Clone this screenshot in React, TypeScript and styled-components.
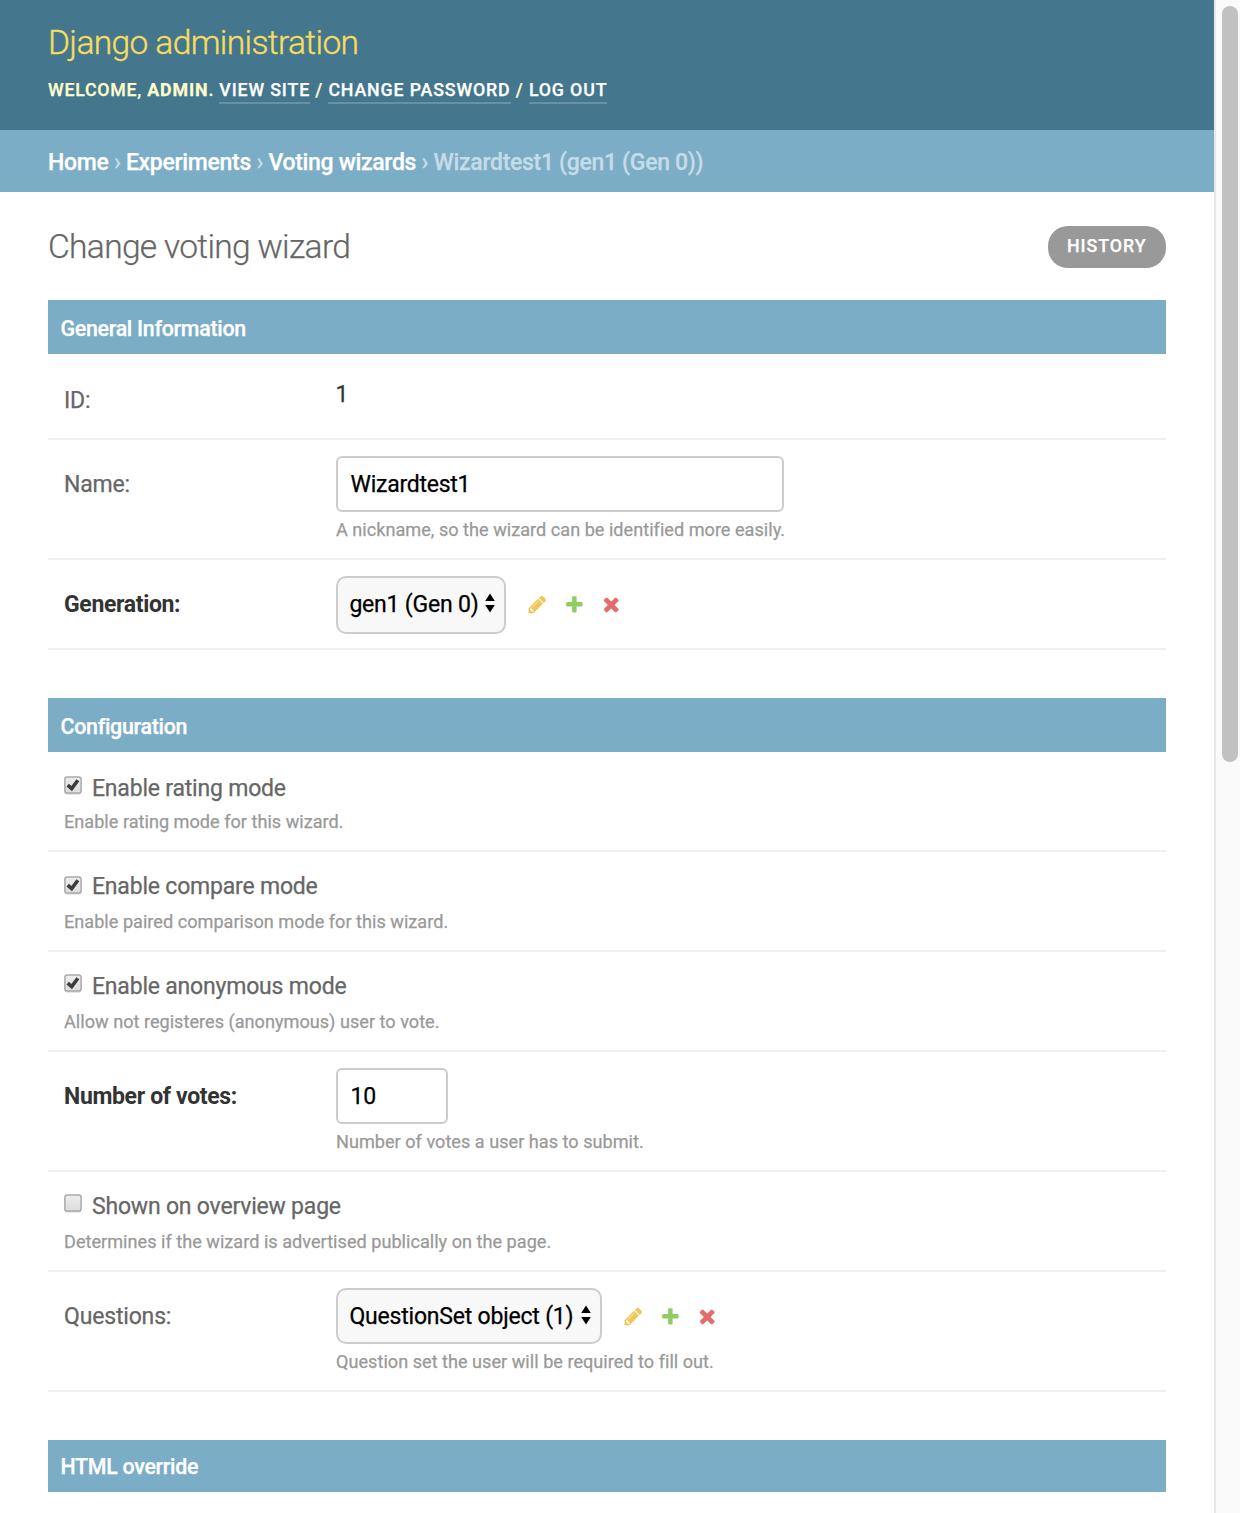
import React from "react";
import styled, { createGlobalStyle, css } from "styled-components";

const GlobalStyle = createGlobalStyle`
  * { box-sizing: border-box; }
  body {
    margin: 0;
    background: #fff;
    color: #333;
    font-family: Roboto, "Liberation Sans", sans-serif;
    font-size: 23px;
    -webkit-text-stroke: 0.25px currentColor;
  }
`;

const Screen = styled.div`
  display: flex;
  height: 1513px;
  overflow: hidden;
`;

const Page = styled.div`
  flex: 1;
  min-width: 0;
`;

const Header = styled.header`
  height: 130px;
  padding: 22px 48px 0;
  background: #44768e;
  color: #ffffcc;
`;

const SiteName = styled.h1`
  margin: 0;
  font-size: 33.6px;
  line-height: 42px;
  font-weight: 300;
  letter-spacing: -0.64px;
  color: #f5dd5d;
  -webkit-text-stroke: 0.4px #f5dd5d;
`;

const UserTools = styled.div`
  display: flex;
  margin-top: 14px;
  font-size: 17.8px;
  line-height: 24px;
  font-weight: 500;
  letter-spacing: 0.85px;
  text-transform: uppercase;
  white-space: pre;

  strong { font-weight: 700; letter-spacing: 0.9px; }
`;

const Greeting = styled.span`
  letter-spacing: 0.73px;
`;

const ToolLink = styled.a`
  height: 26px;
  color: #fff;
  border-bottom: 2px solid #6991a4;
`;

const Breadcrumbs = styled.nav`
  height: 62px;
  padding: 18px 48px 0;
  background: #7cadc6;
  color: #c4dce8;
  font-weight: 500;
  line-height: 30px;
  letter-spacing: -0.31px;
  white-space: pre;

  a { color: #fff; }
`;

const Content = styled.main`
  padding: 34px 48px 0;
`;

const TitleRow = styled.div`
  display: flex;
  justify-content: space-between;
  align-items: flex-start;
  height: 74px;
`;

const Title = styled.h2`
  margin: 0;
  font-size: 33.6px;
  line-height: 42px;
  font-weight: 300;
  letter-spacing: -0.7px;
  color: #666;
`;

const HistoryButton = styled.a`
  width: 118px;
  height: 42px;
  padding-left: 19px;
  border-radius: 20px;
  background: #999;
  color: #fff;
  font-size: 17.8px;
  font-weight: 500;
  line-height: 40px;
  letter-spacing: 0.95px;
`;

const Module = styled.section`
  margin-bottom: 48px;
`;

const ModuleHeader = styled.h3<{ $height?: number; $line?: number }>`
  height: ${(p) => p.$height ?? 54}px;
  margin: 0;
  padding: 0 12.5px;
  background: #7cadc6;
  color: #fff;
  font-size: 21.4px;
  font-weight: 500;
  line-height: ${(p) => p.$line ?? 58}px;
  letter-spacing: -0.29px;
`;

const Row = styled.div<{ $height: number }>`
  display: flex;
  height: ${(p) => p.$height}px;
  padding: 16px 16px 0;
  border-bottom: 2px solid #eee;
`;

const Label = styled.label<{ $bold?: boolean; $drop?: number }>`
  width: 272px;
  padding-top: ${(p) => 15 + (p.$drop ?? 0)}px;
  color: #666;
  line-height: 28px;
  letter-spacing: -0.17px;
  ${(p) =>
    p.$bold &&
    css`
      color: #333;
      font-weight: 700;
      letter-spacing: -0.34px;
      -webkit-text-stroke: 0;
    `}
`;

const Field = styled.div`
  display: flex;
  flex-direction: column;
`;

const ReadOnly = styled.div`
  padding-top: 11px;
  line-height: 28px;
  text-indent: -0.6px;
`;

const TextInput = styled.input<{ $width: number }>`
  width: ${(p) => p.$width}px;
  height: 56px;
  padding: 0 12.5px;
  border: 2px solid #ccc;
  border-radius: 6px;
  background: #fff;
  color: #000;
  font: inherit;
  letter-spacing: -0.25px;
  outline: none;
`;

const HelpText = styled.div<{ $top?: number }>`
  margin-top: ${(p) => p.$top ?? 6}px;
  color: #999;
  font-size: 18.1px;
  line-height: 24px;
  letter-spacing: 0.02px;
  white-space: nowrap;
`;

const RelatedWidget = styled.div<{ $height: number }>`
  display: flex;
  align-items: flex-start;
  height: ${(p) => p.$height}px;
`;

const SelectBox = styled.div<{ $width: number }>`
  display: flex;
  justify-content: space-between;
  width: ${(p) => p.$width}px;
  height: 100%;
  padding: 13px 9px 0 11.4px;
  border: 2px solid #ccc;
  border-radius: 10px;
  background: #f8f8f8;
  color: #000;
  line-height: 28px;
  letter-spacing: -0.2px;
  white-space: nowrap;

  svg { margin-top: 2px; }
`;

const WidgetLinks = styled.div`
  display: flex;
  align-items: center;
  height: 56px;
  margin-left: 20.7px;

  svg { display: block; }
  svg + svg { margin-left: 16.3px; }
  svg + svg + svg { margin: 1px 0 0 15.2px; }
`;

const CheckRow = styled.div<{ $height: number; $top: number }>`
  height: ${(p) => p.$height}px;
  padding: ${(p) => p.$top}px 16px 0;
  border-bottom: 2px solid #eee;
`;

const CheckLine = styled.label<{ $boxTop: number }>`
  display: flex;
  height: 28px;
  color: #666;
  line-height: 30px;
  letter-spacing: -0.2px;

  svg { margin: ${(p) => p.$boxTop}px 9px 0 -1px; }
`;

const ScrollTrack = styled.div`
  width: 26px;
  padding: 6px 2px 0 6px;
  border-left: 2px solid #e8e8e8;
  background: #fafafa;
`;

const ScrollThumb = styled.div`
  width: 16px;
  height: 756px;
  border-radius: 8px;
  background: #c1c1c1;
`;

const Pencil = () => (
  <svg width="20.8" height="20.8" viewBox="0 0 1792 1792">
    <path fill="#f2c557" d="M491 1536l91-91-235-235-91 91v107h128v128h107zm523-928q0-22-22-22-10 0-17 7l-542 542q-7 7-7 17 0 22 22 22 10 0 17-7l542-542q7-7 7-17zm-54-192l416 416-832 832h-416v-416zm683 96q0 53-37 90l-166 166-416-416 166-165q36-38 90-38 53 0 91 38l235 234q37 39 37 91z" />
  </svg>
);

const Plus = () => (
  <svg width="20.8" height="20.8" viewBox="0 0 1792 1792">
    <path fill="#92cb63" d="M1600 796v192q0 40-28 68t-68 28h-416v416q0 40-28 68t-68 28h-192q-40 0-68-28t-28-68v-416h-416q-40 0-68-28t-28-68v-192q0-40 28-68t68-28h416v-416q0-40 28-68t68-28h192q40 0 68 28t28 68v416h416q40 0 68 28t28 68z" />
  </svg>
);

const Cross = () => (
  <svg width="22.4" height="22.4" viewBox="0 0 1792 1792">
    <path fill="#e36c6c" d="M1490 1322q0 40-28 68l-136 136q-28 28-68 28t-68-28l-294-294-294 294q-28 28-68 28t-68-28l-136-136q-28-28-28-68t28-68l294-294-294-294q-28-28-28-68t28-68l136-136q28-28 68-28t68 28l294 294 294-294q28-28 68-28t68 28l136 136q28 28 28 68t-28 68l-294 294 294 294q28 28 28 68z" />
  </svg>
);

const Arrows = () => (
  <svg width="10" height="20" viewBox="0 0 10 20">
    <path d="M5 0.4L9.8 7.9H0.2zM5 19.6L0.2 12.1H9.8z" />
  </svg>
);

const CheckBox = ({ checked }: { checked?: boolean }) => (
  <svg width="20" height="20" viewBox="0 0 20 20">
    <defs>
      <linearGradient id="box-face" x1="0" y1="0" x2="0" y2="1">
        <stop offset="0" stopColor="#eeeeee" />
        <stop offset="1" stopColor="#dcdcdc" />
      </linearGradient>
    </defs>
    <rect x="1.5" y="1.6" width="17" height="17.2" rx="3" fill="#dedede" />
    <rect x="1.9" y="0.9" width="16.2" height="16.2" rx="2.4" fill="url(#box-face)" stroke="#ababab" strokeWidth="1.5" />
    {checked && <path d="M4.7 9.1L8.7 12.6L14.9 4.2" fill="none" stroke="#3c3c3c" strokeWidth="3.6" />}
  </svg>
);

const Select = ({ width, height, value }: { width: number; height: number; value: string }) => (
  <RelatedWidget $height={height}>
    <SelectBox $width={width}>
      {value}
      <Arrows />
    </SelectBox>
    <WidgetLinks>
      <Pencil />
      <Plus />
      <Cross />
    </WidgetLinks>
  </RelatedWidget>
);

type CheckProps = { label: string; help: string; checked?: boolean; height: number; top: number; boxTop: number; helpTop: number };

const CheckField = ({ label, help, checked, height, top, boxTop, helpTop }: CheckProps) => (
  <CheckRow $height={height} $top={top}>
    <CheckLine $boxTop={boxTop}>
      <CheckBox checked={checked} />
      {label}
    </CheckLine>
    <HelpText $top={helpTop}>{help}</HelpText>
  </CheckRow>
);

export default function App() {
  return (
    <Screen>
      <GlobalStyle />
      <Page>
        <Header>
          <SiteName>Django administration</SiteName>
          <UserTools>
            <Greeting>Welcome, <strong>admin</strong>. </Greeting>
            <ToolLink>View site</ToolLink>
            <span> / </span>
            <ToolLink>Change password</ToolLink>
            <span> / </span>
            <ToolLink>Log out</ToolLink>
          </UserTools>
        </Header>
        <Breadcrumbs>
          <a>Home</a> › <a>Experiments</a> › <a>Voting wizards</a> › Wizardtest1 (gen1 (Gen 0))
        </Breadcrumbs>
        <Content>
          <TitleRow>
            <Title>Change voting wizard</Title>
            <HistoryButton>HISTORY</HistoryButton>
          </TitleRow>

          <Module>
            <ModuleHeader>General Information</ModuleHeader>
            <Row $height={86}>
              <Label $drop={2}>ID:</Label>
              <ReadOnly>1</ReadOnly>
            </Row>
            <Row $height={120}>
              <Label>Name:</Label>
              <Field>
                <TextInput $width={448} defaultValue="Wizardtest1" />
                <HelpText>A nickname, so the wizard can be identified more easily.</HelpText>
              </Field>
            </Row>
            <Row $height={90}>
              <Label $bold>Generation:</Label>
              <Select width={170} height={58} value="gen1 (Gen 0)" />
            </Row>
          </Module>

          <Module>
            <ModuleHeader>Configuration</ModuleHeader>
            <CheckField label="Enable rating mode" help="Enable rating mode for this wizard." checked height={100} top={22} boxTop={2} helpTop={8} />
            <CheckField label="Enable compare mode" help="Enable paired comparison mode for this wizard." checked height={100} top={20} boxTop={4} helpTop={10} />
            <CheckField label="Enable anonymous mode" help="Allow not registeres (anonymous) user to vote." checked height={100} top={20} boxTop={2} helpTop={10} />
            <Row $height={120}>
              <Label $bold>Number of votes:</Label>
              <Field>
                <TextInput $width={112} defaultValue="10" />
                <HelpText>Number of votes a user has to submit.</HelpText>
              </Field>
            </Row>
            <CheckField label="Shown on overview page" help="Determines if the wizard is advertised publically on the page." height={100} top={20} boxTop={2} helpTop={10} />
            <Row $height={120}>
              <Label>Questions:</Label>
              <Field>
                <Select width={266} height={56} value="QuestionSet object (1)" />
                <HelpText>Question set the user will be required to fill out.</HelpText>
              </Field>
            </Row>
          </Module>

          <Module>
            <ModuleHeader $height={52} $line={54}>HTML override</ModuleHeader>
          </Module>
        </Content>
      </Page>
      <ScrollTrack>
        <ScrollThumb />
      </ScrollTrack>
    </Screen>
  );
}
